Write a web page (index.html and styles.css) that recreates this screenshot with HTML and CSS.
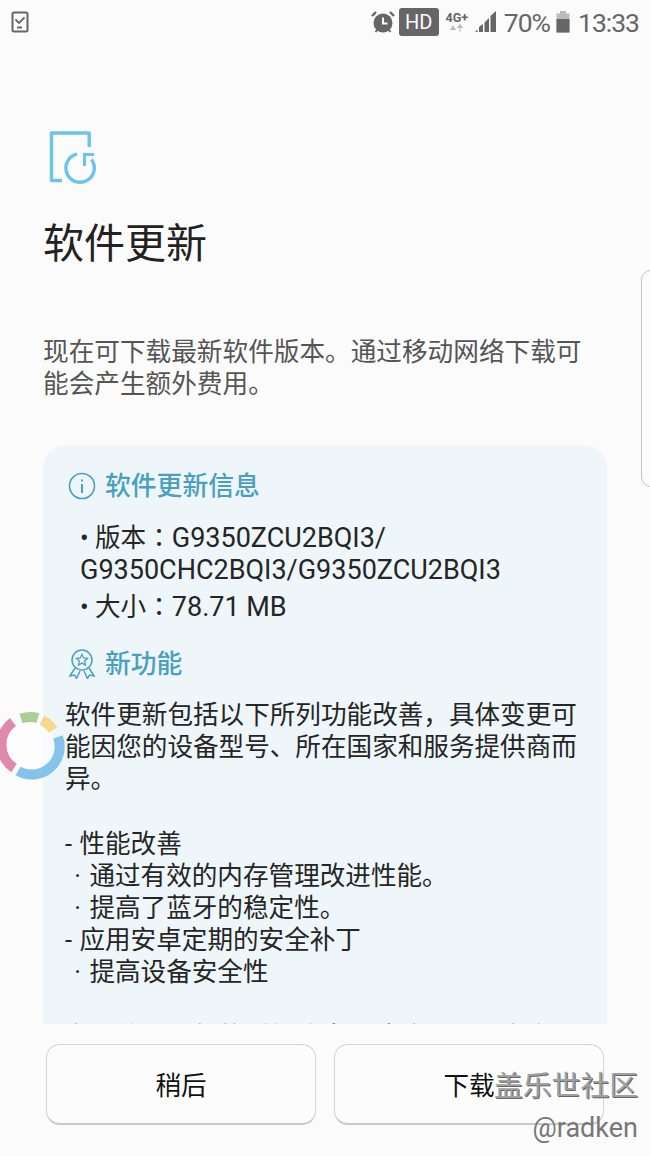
FILE: index.html
```html
<!DOCTYPE html>
<html lang="zh-CN">
<head>
    <meta charset="UTF-8">
    <meta name="viewport" content="width=device-width, initial-scale=1.0">
    <title>软件更新</title>
    <link rel="stylesheet" href="styles.css">
</head>
<body>
    <div class="screen">
        <div class="status-bar">
            <svg class="task-icon" width="18" height="22" viewBox="0 0 18 22">
                <rect x="1.5" y="1.5" width="15" height="19" rx="1.5" fill="none" stroke="#666" stroke-width="2"/>
                <path d="M4.5 8.5 L8 12 L13.5 6.5" fill="none" stroke="#666" stroke-width="1.8"/>
                <rect x="6" y="15.5" width="5" height="2" fill="#666"/>
            </svg>
            <div class="status-right">
                <svg width="24" height="24" viewBox="0 0 24 24">
                    <circle cx="12" cy="13" r="9.5" fill="#666"/>
                    <path d="M1 6 L5 2 M23 6 L19 2" stroke="#666" stroke-width="2.4"/>
                    <path d="M4.5 22 L6.5 19.5 M19.5 22 L17.5 19.5" stroke="#666" stroke-width="2"/>
                    <path d="M12 7.5 V13.5 H16.5" fill="none" stroke="#fbfbfb" stroke-width="2"/>
                </svg>
                <span class="hd-badge">HD</span>
                <div class="net-type">
                    <span class="net-label">4G+</span>
                    <svg width="16" height="9" viewBox="0 0 16 9">
                        <path d="M4 8 V3 M1.5 3.5 H6.5 L4 6.5 Z" fill="#bbb" stroke="#bbb" transform="rotate(180 4 4.5)"/>
                        <path d="M11 8 V3 M8.5 3.5 H13.5 L11 0.5 Z" fill="#bbb" stroke="#bbb"/>
                    </svg>
                </div>
                <svg width="24" height="24" viewBox="0 0 24 24">
                    <path d="M1 22 L3.5 19.5 V22 Z M5 22 V17 L9 14 V22 Z M10.5 22 V12.5 L15 8 V22 Z M16.5 22 V6 L22 1 V22 Z" fill="#666"/>
                </svg>
                <span class="status-text">70%</span>
                <svg width="14" height="22" viewBox="0 0 14 22">
                    <rect x="4" y="0" width="6" height="3" fill="#bbb"/>
                    <rect x="0.5" y="2.5" width="13" height="19" fill="#bbb"/>
                    <rect x="0.5" y="8" width="13" height="13.5" fill="#666"/>
                </svg>
                <span class="status-text clock">13:33</span>
            </div>
        </div>

        <div class="content">
            <svg class="update-icon" width="50" height="56" viewBox="0 0 50 56">
                <path d="M13 50.500 H2.500 V3 H40.200 V17" fill="none" stroke="#6cc5e8" stroke-width="3.400" stroke-linejoin="round"/>
                <path d="M28 24.200 A14.200 14.200 0 1 0 42.500 29.600" fill="none" stroke="#6cc5e8" stroke-width="3.400"/>
                <path d="M34 23 H45 V26 H37 V36 H34 Z" fill="#6cc5e8"/>
            </svg>
            <h1 class="title">软件更新</h1>
            <p class="desc">现在可下载最新软件版本。通过移动网络下载可能会产生额外费用。</p>

            <div class="info-card">
                <div class="card-heading">
                    <svg width="28" height="28" viewBox="0 0 28 28">
                        <circle cx="14" cy="14" r="12.500" fill="none" stroke="#4a9fc0" stroke-width="1.600"/>
                        <rect x="13" y="12" width="2" height="9" fill="#4a9fc0"/>
                        <rect x="13" y="7.500" width="2" height="2" fill="#4a9fc0"/>
                    </svg>
                    <span>软件更新信息</span>
                </div>
                <ul class="info-list">
                    <li>• 版本<span class="colon" lang="zh-TW">：</span><span class="latin">G9350ZCU2BQI3/<br>G9350CHC2BQI3/G9350ZCU2BQI3</span></li>
                    <li>• 大小<span class="colon" lang="zh-TW">：</span><span class="latin">78.71 MB</span></li>
                </ul>
                <div class="card-heading second">
                    <svg width="28" height="30" viewBox="0 0 28 30">
                        <circle cx="14" cy="11" r="10" fill="none" stroke="#4a9fc0" stroke-width="1.500"/>
                        <path d="M14 5.500 L15.700 9 L19.500 9.500 L16.700 12.100 L17.400 16 L14 14.100 L10.600 16 L11.300 12.100 L8.500 9.500 L12.300 9 Z" fill="none" stroke="#4a9fc0" stroke-width="1.300"/>
                        <path d="M7 19 L2 27 L6.500 26 L8.500 29.500 L12 22 M21 19 L26 27 L21.500 26 L19.500 29.500 L16 22" fill="none" stroke="#4a9fc0" stroke-width="1.500"/>
                    </svg>
                    <span>新功能</span>
                </div>
                <p class="card-text">软件更新包括以下所列功能改善，具体变更可能因您的设备型号、所在国家和服务提供商而异。</p>
                <p class="card-text gap">- 性能改善</p>
                <p class="card-text sub">&nbsp;· 通过有效的内存管理改进性能。</p>
                <p class="card-text sub">&nbsp;· 提高了蓝牙的稳定性。</p>
                <p class="card-text">- 应用安卓定期的安全补丁</p>
                <p class="card-text sub">&nbsp;· 提高设备安全性</p>
                <p class="card-text gap">有关软件更新的详细信息，请访问三星官方网站</p>
            </div>
        </div>

        <div class="actions">
            <button class="action-btn">稍后</button>
            <button class="action-btn">下载</button>
        </div>

        <div class="side-handle"></div>
        <svg class="spinner" width="70" height="80" viewBox="0 0 70 80">
            <circle cx="30" cy="40" r="24" fill="#fff" opacity="0.6"/>
            <g fill="none" stroke-width="10">
                <path d="M13 17 A28 28 0 0 0 14 63" stroke="#e08aab"/>
                <path d="M21 13.500 A28 28 0 0 1 38 13" stroke="#a9cf97"/>
                <path d="M42 15 A28 28 0 0 1 53 25" stroke="#f5d98b"/>
                <path d="M58 32 A28 28 0 0 1 18 66" stroke="#84c4ea"/>
            </g>
        </svg>
        <div class="watermark">
            <div class="wm-name">盖乐世社区</div>
            <div class="wm-user">@radken</div>
        </div>
    </div>
</body>
</html>
```

FILE: styles.css
```css
* {
    box-sizing: border-box;
}
body {
    margin: 0;
    background-color: #fbfbfb;
    font-family: Roboto, "Noto Sans CJK SC", sans-serif;
    color: #252525;
}
.screen {
    position: relative;
    width: 650px;
    height: 1156px;
    overflow: hidden;
    display: flex;
    flex-direction: column;
}
.status-bar {
    height: 44px;
    flex: none;
    display: flex;
    align-items: center;
    justify-content: space-between;
    padding: 0 11px;
}
.status-right {
    display: flex;
    align-items: center;
}
.status-text {
    font-size: 26.5px;
    letter-spacing: -1px;
    color: #666;
    margin-left: 6px;
}
.status-text.clock {
    margin-left: 8px;
}
.status-text + svg {
    margin-left: 6px;
}
.hd-badge {
    width: 40px;
    height: 28px;
    margin-left: 4px;
    border-radius: 3px;
    background-color: #666;
    color: #fbfbfb;
    font-size: 20px;
    line-height: 28px;
    text-align: center;
}
.net-type {
    width: 26px;
    margin: 0 4px 0 5px;
    display: flex;
    flex-direction: column;
    align-items: center;
}
.net-label {
    font-size: 12.5px;
    line-height: 13px;
    font-weight: 700;
    color: #666;
}
.content {
    flex: none;
    height: 980px;
    overflow: hidden;
    padding: 86px 43px 0;
}
.update-icon {
    display: block;
    margin-left: 6px;
}
.title {
    margin: 28px 0 0;
    font-size: 41px;
    line-height: 60px;
    font-weight: 400;
    color: #222;
}
.desc {
    margin: 62px 0 0;
    font-size: 25.65px;
    line-height: 32px;
    color: #555;
}
.info-card {
    margin-top: 45px;
    min-height: 600px;
    padding: 25px 23px 0 22px;
    border-radius: 24px 24px 0 0;
    background-color: #eef6fa;
}
.card-heading {
    display: flex;
    align-items: center;
    gap: 9px;
    margin-left: 3px;
    font-size: 25.8px;
    line-height: 32px;
    font-weight: 500;
    color: #4a9fc0;
}
.card-heading.second {
    margin-top: 25px;
}
.info-list {
    margin: 20px 0 0;
    padding: 0 0 0 15px;
    list-style: none;
    font-size: 25.6px;
    line-height: 32px;
}
.info-list li + li {
    margin-top: 5px;
}
.colon {
    font-family: "Noto Sans CJK TC", sans-serif;
    line-height: 1;
}
.latin {
    font-size: 27px;
    line-height: 1;
}
.card-text {
    margin: 0;
    font-size: 25.6px;
    line-height: 32px;
    word-spacing: 1px;
}
.card-text.sub {
    padding-left: 1px;
    word-spacing: 2px;
}
.card-heading + .card-text {
    margin-top: 19px;
}
.card-text.gap {
    margin-top: 33px;
}
.actions {
    flex: none;
    display: flex;
    gap: 18px;
    padding: 20px 46px 0;
}
.action-btn {
    width: 270px;
    height: 81px;
    padding-bottom: 3px;
    border: 1px solid #d4d4d4;
    border-bottom: 2px solid #c8c8c8;
    border-radius: 14px;
    background-color: #fcfcfc;
    font-family: inherit;
    font-size: 25.6px;
    color: #111;
}
.side-handle {
    position: absolute;
    top: 270px;
    left: 641px;
    width: 20px;
    height: 217px;
    border: 1.5px solid #c4c4c4;
    border-radius: 10px;
}
.spinner {
    position: absolute;
    top: 705px;
    left: 0;
}
.watermark {
    position: absolute;
    top: 1069px;
    right: 12px;
    text-align: right;
    color: #a0a0a0;
    text-shadow: 1px 1px 0 #666;
}
.wm-name {
    font-size: 28.8px;
    line-height: 34px;
}
.wm-user {
    margin-top: 10px;
    font-size: 27px;
    line-height: 30px;
    color: #777;
    text-shadow: none;
}
```
